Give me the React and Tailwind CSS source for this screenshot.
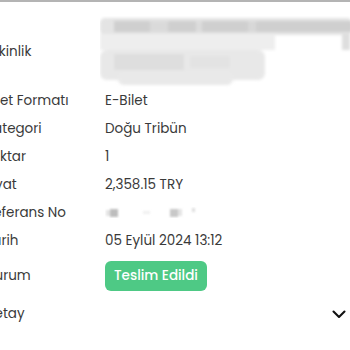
import React from "react";

function Blur() {
  return (
    <svg width="250" height="72" viewBox="0 0 250 72" className="block">
      <defs>
        <filter id="b" x="-20%" y="-40%" width="140%" height="180%">
          <feGaussianBlur stdDeviation="1.6" />
        </filter>
      </defs>
      <g filter="url(#b)">
        <rect x="0" y="2" width="252" height="17" rx="5" fill="#e4e4e4" />
        <rect x="14" y="5" width="238" height="11" fill="#cfcfcf" />
        <rect x="50" y="5" width="18" height="11" fill="#dadada" />
        <rect x="96" y="5" width="6" height="11" fill="#dcdcdc" />
        <rect x="148" y="5" width="8" height="11" fill="#d8d8d8" />
        <rect x="0" y="18" width="175" height="16" fill="#eeeeee" />
        <rect x="242" y="18" width="8" height="16" fill="#dedede" />
        <rect x="0" y="34" width="165" height="30" rx="7" fill="#e8e8e8" />
        <rect x="14" y="38" width="70" height="16" fill="#dedede" />
        <rect x="90" y="40" width="40" height="12" fill="#e3e3e3" />
        <rect x="18" y="56" width="115" height="13" rx="6" fill="#e9e9e9" />
      </g>
    </svg>
  );
}

function Row({ label, children, className = "" }) {
  return (
    <div className={"flex items-center " + className}>
      <div className="-ml-[15px] w-[120px] shrink-0 text-[13.5px] text-[#3a3a3a] whitespace-nowrap overflow-hidden">
        {label}
      </div>
      <div className="flex-1 text-[13.5px] text-[#3a3a3a] whitespace-nowrap">{children}</div>
    </div>
  );
}

export default function App() {
  return (
    <div
      className="w-[350px] h-[350px] bg-white overflow-hidden border-t-2 border-[#b4b4b4]"
      style={{ fontFamily: "Poppins, Inter, 'Noto Sans', sans-serif" }}
    >
      <div className="flex items-center pt-[15px] h-[85px]">
        <div className="-ml-[13px] w-[113px] shrink-0 text-[13.5px] text-[#3a3a3a]">Etkinlik</div>
        <Blur />
      </div>
      <Row label="Bilet Formatı" className="h-[28px]">E-Bilet</Row>
      <Row label="Kategori" className="h-[28px]">Doğu Tribün</Row>
      <Row label="Miktar" className="h-[28px]">1</Row>
      <Row label="Fiyat" className="h-[28px]">2,358.15 TRY</Row>
      <Row label="Referans No" className="h-[28px]">
        <svg width="100" height="14" viewBox="0 0 100 14" className="block">
          <defs>
            <filter id="c">
              <feGaussianBlur stdDeviation="0.8" />
            </filter>
          </defs>
          <g filter="url(#c)">
            <rect x="5" y="3" width="8" height="8" fill="#bdbdbd" />
            <rect x="1" y="4" width="4" height="6" fill="#e4e4e4" />
            <rect x="38" y="5" width="7" height="3" fill="#f0f0f0" />
            <rect x="65" y="3" width="8" height="8" fill="#c8c8c8" />
            <rect x="73" y="3" width="4" height="7" fill="#e4e4e4" />
            <rect x="87" y="2" width="3" height="4" fill="#dedede" />
          </g>
        </svg>
      </Row>
      <Row label="Tarih" className="h-[28px]">05 Eylül 2024 13:12</Row>
      <Row label="Durum" className="h-[42px]">
        <span className="inline-flex items-center h-[30px] px-[9px] rounded-[6px] bg-[#4ec985] text-white font-medium text-[13.5px]">
          Teslim Edildi
        </span>
      </Row>
      <div className="flex items-center h-[34px]">
        <div className="-ml-[15px] flex-1 text-[13.5px] text-[#3a3a3a]">Detay</div>
        <svg width="14" height="9" viewBox="0 0 14 9" className="mr-[4px] mt-[1px]">
          <polyline points="1.5,1.5 7,7 12.5,1.5" fill="none" stroke="#111" strokeWidth="2.1" strokeLinecap="round" strokeLinejoin="round" />
        </svg>
      </div>
    </div>
  );
}
